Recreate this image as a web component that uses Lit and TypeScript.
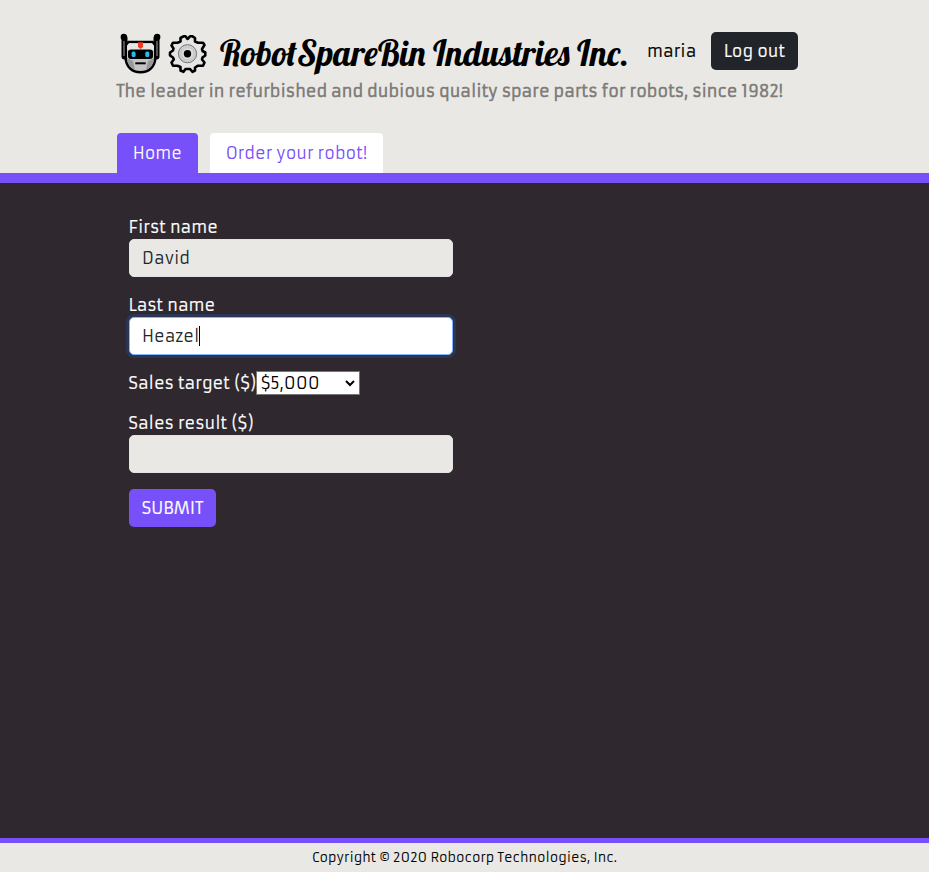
import { LitElement, html, css } from "lit";

class RobotIcon extends LitElement {
  static styles = css`:host, svg { display: block; }`;
  render() {
    return html`<svg width="48" height="48" viewBox="0 0 48 48">
      <path d="M8.500 8V26.500M40.500 8V26.500" stroke="#000" stroke-width="6" stroke-linecap="round"/>
      <circle cx="7.800" cy="7" r="3.200"/><circle cx="41.200" cy="7" r="3.200"/>
      <path d="M12.500 12H36.500L39.300 15V28C39 36.500 33 42.300 24.500 42.300S10 36.500 9.700 28V15Z" fill="#c4c4c6" stroke="#000" stroke-width="2.600"/>
      <path d="M8 11V26M41 11V26" stroke="#666" stroke-width="1.600"/>
      <path d="M13 13.200H36L38 16V20H11V16Z" fill="#e6e6e6"/>
      <path d="M10.800 28L17 31L19 40Q11.500 37 10.800 28ZM38.200 28L32 31L30 40Q37.500 37 38.200 28Z" fill="#999"/>
      <path d="M22 12.300H27V17L24.500 19L22 17Z" fill="#ef3b24"/>
      <rect x="12" y="19.500" width="25" height="9.500" rx="3"/>
      <rect x="15.600" y="21.500" width="4" height="5.600" rx="1.600" fill="#28bde9"/>
      <rect x="29.300" y="21.500" width="4" height="5.600" rx="1.600" fill="#28bde9"/>
      <path d="M19.300 33.300H29.700" stroke="#000" stroke-width="2"/>
    </svg>`;
  }
}
customElements.define("robot-icon", RobotIcon);

class GearIcon extends LitElement {
  static styles = css`:host, svg { display: block; }`;
  render() {
    return html`<svg width="48" height="48" viewBox="0 0 48 48">
      <path d="M16.500 8L19.500 6.300H21.500L23.500 9L26 6.300H28.500L31 8V11.500L34 12.700H39L40.500 15L38 19L38.500 21L41.300 22.500V25.500L38.500 27.500L38 29.500L40.500 32.500L39 35.700H34L31 37.500V40.500L28.500 41.800L26 39H21.500L19.500 41.800L16.500 40.500V37L13.500 35.700H9L7.500 32.500L9.800 29.500L9 27.500L6 25.500V22.500L9 20.500L9.500 18.500L7.500 15.500L9 12.700H13.500L16.500 11.500Z" fill="#e5e5e5" stroke="#000" stroke-width="2.600" stroke-linejoin="round"/>
      <circle cx="23.500" cy="23.700" r="9.100" fill="#ccc" stroke="#777" stroke-width="1"/>
      <circle cx="23.500" cy="23.700" r="5.500" fill="#ddd"/>
      <circle cx="23.500" cy="23.700" r="3.700"/>
    </svg>`;
  }
}
customElements.define("gear-icon", GearIcon);

class AppRoot extends LitElement {
  static styles = css`
    :host { display: flex; flex-direction: column; height: 872px; overflow: hidden; background: #2f282e;
      font: 400 16px/24px Armata, Roboto, sans-serif; color: #212529; }
    * { box-sizing: border-box; }
    header { height: 183px; background: #e9e8e4; border-bottom: 10px solid #7850fa; padding: 30px 0 0 116px;
      display: flex; flex-direction: column; }
    .top { display: flex; height: 49px; }
    .title { width: 415px; height: 47px; margin-left: 8px; font: 400 35px/47px Lobster, "Liberation Serif", serif; color: #000; white-space: nowrap; }
    .user { margin: 9px 0 0 12px; width: 64px; color: #000; -webkit-text-stroke: .2px #000; }
    button { font: inherit; border: 0; border-radius: 5px; color: #fff; height: 38px; padding: 0; width: 87px; -webkit-text-stroke: .2px #fff; }
    .logout { background: #212529; margin-top: 2px; }
    .tag { font-weight: 700; color: #807d7a; white-space: nowrap; margin-left: .6px; }
    nav { display: flex; gap: 12px; margin: auto 0 0 1px; }
    nav a { height: 40px; line-height: 40px; padding-left: 15.700px; border-radius: 4px 4px 0 0; background: #fff; color: #7850fa;
      width: 173px; white-space: nowrap; }
    nav a.on { background: #7850fa; color: #fff; width: 81px; }
    main { flex: 1; padding: 32px 0 0 129px; }
    .group { width: 324px; margin-bottom: 16px; }
    label { display: block; color: #fff; margin-left: -.4px; white-space: nowrap; -webkit-text-stroke: .2px #fff; }
    .field { height: 38px; border: 1px solid #e4e4e6; border-radius: 5px; background: #e9e8e4; padding: 6px 12px; display: flex; }
    .focus { background: #fff; border-color: #86b7fe; box-shadow: 0 0 0 3px #293655; }
    .caret { width: 1px; height: 20px; margin-top: 2px; background: #000; }
    .row { display: flex; height: 24px; }
    .row label { width: 127.400px; }
    .select { width: 104px; height: 24px; border: 1px solid #767676; background: #fff; color: #000; padding: 0 4px;
      display: flex; align-items: center; justify-content: space-between; line-height: 22px; }
    .submit { background: #7850fa; }
    footer { height: 34px; border-top: 5px solid #7850fa; background: #e9e8e4; color: #000; text-align: center;
      font-size: 12.800px; line-height: 30px; }
  `;
  render() {
    return html`
      <header>
        <div class="top">
          <robot-icon></robot-icon><gear-icon></gear-icon>
          <div class="title">RobotSpareBin Industries Inc.</div>
          <span class="user">maria</span>
          <button class="logout">Log out</button>
        </div>
        <div class="tag">The leader in refurbished and dubious quality spare parts for robots, since 1982!</div>
        <nav><a class="on">Home</a><a>Order your robot!</a></nav>
      </header>
      <main>
        <div class="group"><label>First name</label><div class="field">David</div></div>
        <div class="group"><label>Last name</label><div class="field focus">Heazel<span class="caret"></span></div></div>
        <div class="group row"><label>Sales target ($)</label>
          <div class="select">$5,000<svg width="10" height="8" viewBox="0 0 10 8"><path d="M1 2L5 6L9 2" fill="none" stroke="#000" stroke-width="2"/></svg></div></div>
        <div class="group"><label>Sales result ($)</label><div class="field"></div></div>
        <button class="submit">SUBMIT</button>
      </main>
      <footer>Copyright © 2020 Robocorp Technologies, Inc.</footer>`;
  }
}
customElements.define("app-root", AppRoot);
